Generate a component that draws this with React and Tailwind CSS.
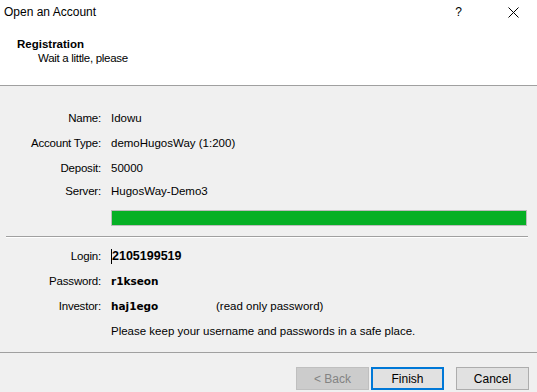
import React from "react";

const font = { fontFamily: '"Liberation Sans", Arial, sans-serif' };
const boldFont = { fontFamily: '"DejaVu Sans", Verdana, sans-serif' };

function Row({ label, children, h = "h-[25px]" }) {
  return (
    <div className={`flex items-center ${h}`}>
      <div className="w-[101px] text-right text-black tracking-[-0.2px]">{label}</div>
      <div className="ml-[10px] flex items-center">{children}</div>
    </div>
  );
}

export default function App() {
  return (
    <div className="w-[537px] h-[392px] bg-[#f0f0f0] text-[11.5px] text-black overflow-hidden" style={font}>
      {/* Header */}
      <div className="bg-white h-[86px] border-b border-[#a0a0a0]">
        <div className="flex items-center h-[24px] pl-[4px]">
          <span className="text-[12px]">Open an Account</span>
          <span className="ml-auto mr-[46px] text-[12px]">?</span>
          <svg width="11" height="11" viewBox="0 0 11 11" className="mr-[18px]">
            <path d="M0.5 0.5 L10.5 10.5 M10.5 0.5 L0.5 10.5" stroke="#000" strokeWidth="1" fill="none" />
          </svg>
        </div>
        <div className="pl-[17px] mt-[13px] font-bold leading-[14px]">Registration</div>
        <div className="pl-[38px] leading-[14px] tracking-[-0.3px]">Wait a little, please</div>
      </div>

      {/* Body */}
      <div className="pt-[20px]">
        <Row label="Name:">Idowu</Row>
        <Row label="Account Type:">demoHugosWay (1:200)</Row>
        <Row label="Deposit:">50000</Row>
        <Row label="Server:" h="h-[21px]">HugosWay-Demo3</Row>

        <div className="ml-[111px] mt-[8px] w-[416px] h-[16px] border border-[#bcbcbc] bg-[#06b025]" />

        <div className="ml-[6px] mt-[10px] w-[522px] border-t border-[#a0a0a0] border-b border-b-white" />

        <div className="mt-[6px]">
          <Row label="Login:">
            <span className="border-l border-black font-bold text-[12.5px] leading-[15px]">2105199519</span>
          </Row>
          <Row label="Password:">
            <span className="font-bold text-[10.5px]" style={boldFont}>r1kseon</span>
          </Row>
          <Row label="Investor:">
            <span className="font-bold text-[10.5px] w-[105px]" style={boldFont}>haj1ego</span>
            <span>(read only password)</span>
          </Row>
          <div className="h-[25px] flex items-center pl-[111px]">Please keep your username and passwords in a safe place.</div>
        </div>

        <div className="mt-[8px] w-full border-t border-[#a0a0a0]" />

        {/* Buttons */}
        <div className="flex justify-end pr-[8px] mt-[14px] text-[12px]">
          <button className="w-[73px] h-[23px] bg-[#cccccc] border border-[#bfbfbf] text-[#838383]">&lt; Back</button>
          <button className="ml-[2px] w-[73px] h-[23px] bg-[#e1e1e1] border-2 border-[#0078d7]">Finish</button>
          <button className="ml-[12px] w-[73px] h-[23px] bg-[#e1e1e1] border border-[#adadad]">Cancel</button>
        </div>
      </div>
    </div>
  );
}
